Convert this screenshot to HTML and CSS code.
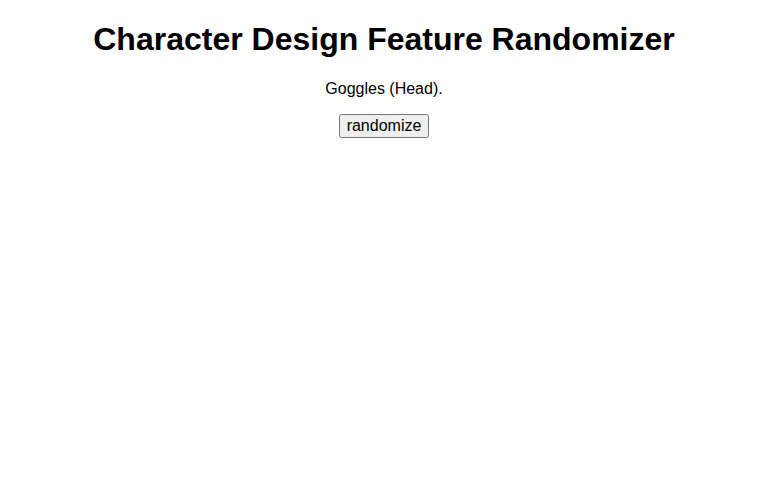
FILE: index.html
```html
<!DOCTYPE html>
<html>
<head>
<meta charset="utf-8">
<link rel="stylesheet" href="styles.css">
</head>
<body>
<div class="app">
<h1 class="title">Character Design Feature Randomizer</h1>
<p class="result">Goggles (Head).</p>
<button class="btn">randomize</button>
</div>
</body>
</html>
```
FILE: styles.css
```css
body {
  margin: 0 8px;
  font-family: "Liberation Sans", Arial, sans-serif;
  background: #fff;
  color: #000;
}
.app {
  text-align: center;
}
.title {
  font-size: 32px;
  font-weight: bold;
  margin: 21.44px 0;
}
.result {
  font-size: 16px;
  margin: 16px 0;
}
.btn {
  font-family: "Liberation Sans", Arial, sans-serif;
  font-size: 16px;
}
```
